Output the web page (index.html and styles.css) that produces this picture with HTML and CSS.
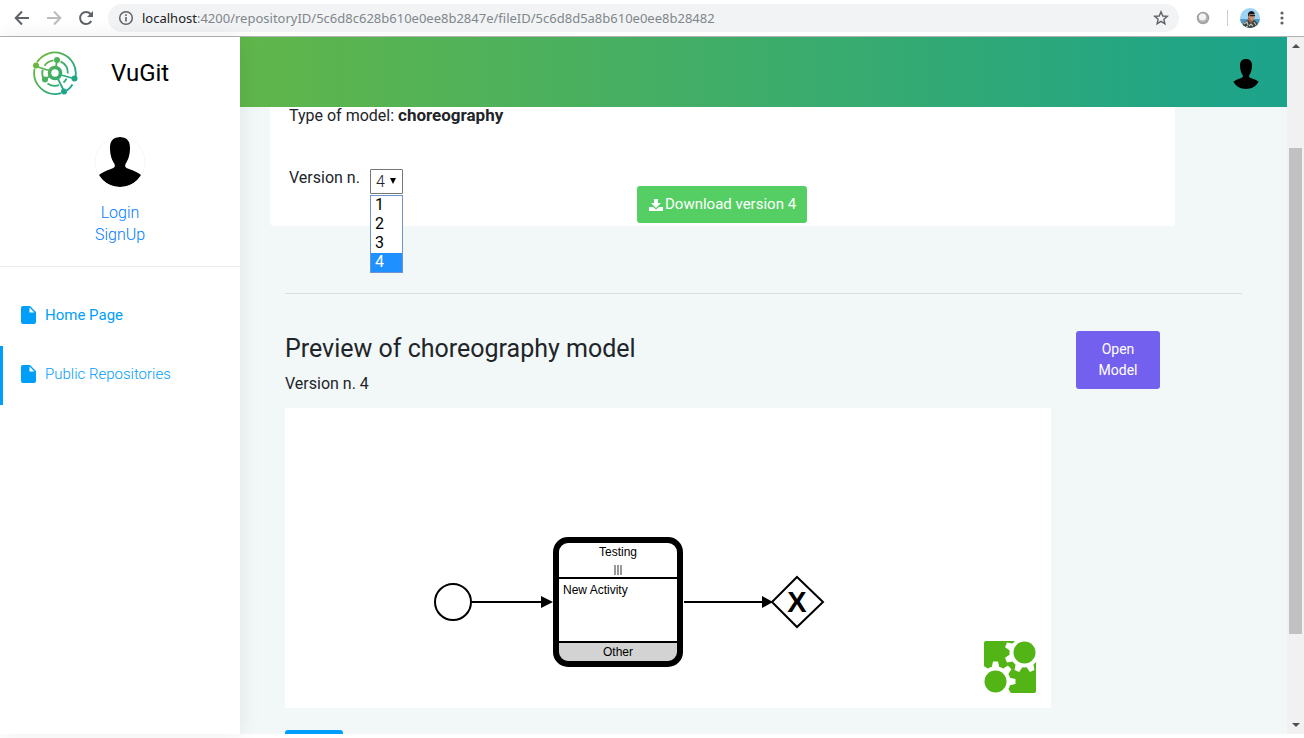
FILE: index.html
```html
<!DOCTYPE html>
<html lang="en">
<head>
<meta charset="utf-8">
<title>VuGit</title>
<link rel="stylesheet" href="styles.css">
</head>
<body>
<div class="browser">
  <button class="nav-btn" aria-label="Back"><svg width="16" height="16" viewBox="0 0 16 16" fill="none" stroke="#5f6368" stroke-width="2"><path d="M15 8H2M8 1.500L1.700 8L8 14.500"/></svg></button>
  <button class="nav-btn" aria-label="Forward"><svg width="16" height="16" viewBox="0 0 16 16" fill="none" stroke="#babcbe" stroke-width="2"><path d="M1 8H14M8 1.500L14.300 8L8 14.500"/></svg></button>
  <button class="nav-btn" aria-label="Reload"><svg width="16" height="16" viewBox="0 0 16 16"><path d="M13.300 11A6 6 0 1 1 12.600 4" fill="none" stroke="#5f6368" stroke-width="2"/><path d="M15 1V7H9Z" fill="#5f6368"/></svg></button>
  <div class="address">
    <svg width="16" height="16" viewBox="0 0 16 16"><circle cx="8" cy="8" r="6.300" fill="none" stroke="#5f6368" stroke-width="1.500"/><path d="M7.200 7h1.600v4.500H7.200zM7.200 4.300h1.600v1.600H7.200z" fill="#5f6368"/></svg>
    <span class="url"><span class="host">localhost</span>:4200/repositoryID/5c6d8c628b610e0ee8b2847e/fileID/5c6d8d5a8b610e0ee8b28482</span>
    <svg width="16" height="16" viewBox="0 0 16 16"><path d="M8 1.800L9.800 6L14.300 6.400L10.900 9.300L11.900 13.700L8 11.400L4.100 13.700L5.100 9.300L1.700 6.400L6.200 6Z" fill="none" stroke="#5f6368" stroke-width="1.400"/></svg>
  </div>
  <svg class="extension" width="14" height="14" viewBox="0 0 14 14"><circle cx="7" cy="7" r="5.500" fill="#b4b4b4" stroke="#a0a0a0" stroke-width="1.500"/><circle cx="6.500" cy="6" r="3.600" fill="#f4f4f4"/></svg>
  <span class="divider"></span>
  <svg class="profile" width="20" height="20" viewBox="0 0 20 20"><defs><clipPath id="face"><circle cx="10" cy="10" r="10"/></clipPath></defs><g clip-path="url(#face)"><path fill="#9dd3f5" d="M0 0h20v20H0z"/><path fill="#4d9ac8" d="M0 11h20v9H0z"/><path d="M8 9h5v6H8z" fill="#a3664c"/><path d="M8.500 5.500Q11.500 3 14.500 6V10Q13.500 13 11 12.500L8.500 9Z" fill="#c88e6e"/><path d="M8 7.500Q7.500 3.500 11.500 3Q15 3.500 14.500 6L9.500 6L9 9Z" fill="#18191d"/><path d="M10 6.800h5v1.500h-5z" fill="#222"/><path d="M2 20Q3 14 8 12L11 15L14 12Q18 14 19 20Z" fill="#3c4040"/><path d="M4 16l3-2 1 3M9 18l2-2 2 2M14 14l2 3M6 19l2-1" stroke="#c8c4b4" stroke-width="1.200" fill="none"/></g></svg>
  <button class="nav-btn" aria-label="Menu"><svg width="16" height="16" viewBox="0 0 16 16" fill="#5f6368"><circle cx="8" cy="3" r="1.600"/><circle cx="8" cy="8" r="1.600"/><circle cx="8" cy="13" r="1.600"/></svg></button>
</div>

<div class="app">
  <aside class="sidebar">
    <div class="brand">
      <svg width="46" height="46" viewBox="0 0 46 46"><defs><linearGradient id="lg" gradientUnits="userSpaceOnUse" x1="4" y1="8" x2="42" y2="38"><stop offset="0" stop-color="#72b836"/><stop offset="1" stop-color="#12a593"/></linearGradient></defs>
        <g fill="none" stroke="url(#lg)" stroke-width="1.800"><path d="M5 12.300A21 21 0 0 1 43.500 27M40.500 34.500A21 21 0 0 1 35 40.500M29 43.100A21 21 0 0 1 2.600 18.600"/><path d="M21.500 10.300A12.800 12.800 0 0 0 12.500 15.700M28.500 11.400A12.800 12.800 0 0 1 35.800 23.500M34.500 28.600A12.800 12.800 0 0 1 31.500 32.500M27 35.200A12.800 12.800 0 0 1 15.500 33.500M11.500 28.600A12.800 12.800 0 0 1 10.700 19.500"/><path d="M3 16L17 20.500M25 10L24 17M12 30L18 26M29 25L42 28.500M26 29L32 41"/><circle cx="23" cy="23" r="5.500" stroke-width="3.600"/></g>
        <g fill="url(#lg)"><circle cx="4" cy="15.500" r="3"/><circle cx="25" cy="10" r="3"/><circle cx="13" cy="29.500" r="3"/><circle cx="42.500" cy="28.500" r="3"/><circle cx="32" cy="41.500" r="3"/></g></svg>
      <span class="brand-name">VuGit</span>
    </div>
    <div class="account">
      <svg class="avatar" width="50" height="50" viewBox="0 0 50 50"><use href="#person"/></svg>
      <a href="#login">Login</a>
      <a href="#signup">SignUp</a>
    </div>
    <nav class="menu">
      <a class="menu-item strong" href="#home"><svg width="15" height="18" viewBox="0 0 15 18"><path fill="#009efb" fill-rule="evenodd" d="M2 0H9L15 6V16Q15 18 13 18H2Q0 18 0 16V2Q0 0 2 0ZM8.500 1.500V6.500H13.500Z"/></svg>Home Page</a>
      <a class="menu-item active" href="#public"><svg width="15" height="18" viewBox="0 0 15 18"><path fill="#009efb" fill-rule="evenodd" d="M2 0H9L15 6V16Q15 18 13 18H2Q0 18 0 16V2Q0 0 2 0ZM8.500 1.500V6.500H13.500Z"/></svg>Public Repositories</a>
    </nav>
  </aside>

  <div class="main">
    <header class="topbar">
      <button class="user-btn" aria-label="Account"><svg width="30" height="30" viewBox="0 0 50 50"><path id="person" d="M25 0C32 0 35 4 35 11C35 19 32.500 24 30.500 27C29.500 30 31 31 34 32C39 33.500 43 35.500 46 38C41 46 34 50 25 50S9 46 4 38C7 35.500 11 33.500 16 32C19 31 20.500 30 19.500 27C17.500 24 15 19 15 11C15 4 18 0 25 0Z"/></svg></button>
    </header>
    <main class="content">
      <section class="card">
        <p class="type">Type of model: <b>choreography</b></p>
        <div class="version-row">
          <label for="version">Version n.</label>
          <div class="picker">
            <select id="version"><option>1</option><option>2</option><option>3</option><option selected>4</option></select>
            <svg class="caret" width="6" height="6" viewBox="0 0 6 6"><path d="M0 0H6L3 6Z"/></svg>
            <ul class="options" role="listbox" aria-label="Version n.">
              <li role="option">1</li><li role="option">2</li><li role="option">3</li><li role="option" class="selected" aria-selected="true">4</li>
            </ul>
          </div>
          <button class="btn download"><svg width="14" height="12" viewBox="0 0 14 12" fill="#fff"><path d="M5 0H9V4H12L7 9L2 4H5Z"/><path d="M0 8H4L7 10.500L10 8H14V12H0Z"/></svg>Download version 4</button>
        </div>
      </section>
      <hr class="rule">
      <section class="preview">
        <div class="preview-body">
          <h1>Preview of choreography model</h1>
          <p class="subtitle">Version n. 4</p>
          <svg class="diagram" viewBox="0 0 766 300" role="img" aria-label="Choreography diagram">
            <g fill="#fff" stroke="#000" stroke-width="2">
              <circle cx="168" cy="194" r="18"/>
              <path d="M187 194H260M399 194H480"/>
              <path d="M512 169L538 194L512 219L487 194Z"/>
            </g>
            <path d="M256 188L268 194L256 200ZM477 188L488 194L477 200Z"/>
            <rect x="271" y="132" width="124" height="124" rx="12" fill="#fff"/>
            <path d="M271 234H395V244Q395 256 383 256H283Q271 256 271 244Z" fill="#d3d3d3"/>
            <path d="M271 170H395M271 234H395" stroke="#000" stroke-width="2"/>
            <rect x="271" y="132" width="124" height="124" rx="12" fill="none" stroke="#000" stroke-width="6"/>
            <path d="M330 157V167M333 157V167M336 157V167" stroke="#333"/>
            <g class="node-text">
              <text x="333" y="148" text-anchor="middle">Testing</text>
              <text x="278" y="186">New Activity</text>
              <text x="333" y="248" text-anchor="middle">Other</text>
            </g>
            <text class="gate" x="512" y="204" text-anchor="middle">X</text>
            <g transform="translate(699 233)">
              <rect width="52" height="52" rx="2" fill="#52b415"/>
              <path d="M40 0H53V14H40ZM-1 40H12V53H-1Z" fill="#fff"/>
              <g fill="#fff" transform="translate(40.500 11.500)"><circle r="15"/><g id="teeth" transform="rotate(22.500)"><path id="bar" d="M-20 -2.500L-13 -4V4L-20 2.500ZM20 -2.500L13 -4V4L20 2.500Z"/><use href="#bar" transform="rotate(45)"/><use href="#bar" transform="rotate(90)"/><use href="#bar" transform="rotate(135)"/></g></g>
              <g fill="#fff" transform="translate(11.500 40.500)"><circle r="15"/><use href="#teeth" transform="rotate(22.500)"/></g>
              <circle cx="40.500" cy="11.500" r="11" fill="#52b415"/><circle cx="11.500" cy="40.500" r="11" fill="#52b415"/>
            </g>
          </svg>
          <button class="btn back" aria-label="Back to repository"></button>
        </div>
        <button class="btn open">Open Model</button>
      </section>
    </main>
  </div>
  <div class="scrollbar" aria-hidden="true">
    <svg width="8" height="4" viewBox="0 0 8 4"><path d="M4 0L8 4H0Z" fill="#505050"/></svg>
    <div class="thumb"></div>
    <svg width="8" height="4" viewBox="0 0 8 4"><path d="M0 0H8L4 4Z" fill="#505050"/></svg>
  </div>
</div>
</body>
</html>
```
FILE: styles.css
```css
* { box-sizing: border-box; }
body {
  margin: 0;
  height: 100vh;
  padding-bottom: 4px;
  display: flex;
  flex-direction: column;
  overflow: hidden;
  background: #fff;
  color: #212529;
  font: 300 16px/24px Roboto, sans-serif;
}
button { border: 0; padding: 0; background: none; font: inherit; cursor: pointer; }
a { text-decoration: none; }
p, h1, ul { margin: 0; padding: 0; }
svg { flex: none; display: block; }

.browser {
  flex: none;
  display: flex;
  align-items: center;
  height: 37px;
  padding: 0 14px;
  border-bottom: 1px solid #b3b3b3;
}
.nav-btn { width: 16px; margin-right: 16px; }
.nav-btn:last-child { margin: 0 0 0 14px; }
.address {
  flex: 1;
  display: flex;
  align-items: center;
  gap: 8px;
  height: 28px;
  margin-left: -2px;
  padding: 0 10px;
  border-radius: 14px;
  background: #f1f3f4;
}
.url { flex: 1; font: 400 13px/20px "Noto Sans", sans-serif; color: #80868b; }
.host { color: #202124; }
.extension { margin-left: 17px; }
.divider { width: 1px; height: 16px; margin: 0 12px 0 17px; background: #ccc; }

.app { flex: 1; display: flex; min-height: 0; }
.sidebar {
  flex: none;
  position: relative;
  z-index: 1;
  width: 240px;
  background: #fff;
  box-shadow: 1px 0 20px rgba(0, 0, 0, .08);
}
.brand { display: flex; align-items: center; gap: 33px; height: 72px; padding-left: 32px; }
.brand-name { font-size: 24px; font-weight: 400; color: #000; }
.account {
  display: flex;
  flex-direction: column;
  align-items: center;
  padding: 28px 0 20px;
  border-bottom: 1px solid #e9ecef;
  font-size: 16px;
  line-height: 22px;
}
.account a { color: #007bff; }
.avatar { margin-bottom: 15px; border-radius: 50%; box-shadow: 0 0 1px #ddd; }
.menu { padding-top: 20px; }
.menu-item {
  display: flex;
  align-items: center;
  gap: 9px;
  height: 59px;
  padding: 0 0 3px 18px;
  border-left: 3px solid transparent;
  color: #009efb;
  font-size: 15px;
}
.strong { font-weight: 400; }
.active { border-color: #009efb; }

.main { flex: 1; min-width: 0; display: flex; flex-direction: column; background: #f2f7f8; }
.topbar {
  flex: none;
  display: flex;
  align-items: center;
  justify-content: flex-end;
  height: 70px;
  padding: 3px 26px 0 0;
  background: linear-gradient(to right, #60b64a, #1ba38b);
}
.content { flex: 1; min-height: 0; overflow: hidden; padding: 0 45px; font-weight: 400; }
.card {
  margin: 0 67px 0 -15px;
  padding: 0 19px 3px;
  border-radius: 0 0 4px 4px;
  background: #fff;
}
.type { height: 18px; line-height: 16px; }
.type b { font-size: 17px; font-weight: 700; }
.version-row { display: flex; align-items: flex-start; padding-top: 41px; }
.version-row label { width: 81px; }
.picker { position: relative; width: 33px; margin-top: 3px; }
#version {
  display: block;
  appearance: none;
  width: 100%;
  height: 25px;
  padding: 0 5px;
  border: 1px solid #767676;
  border-radius: 1px;
  background: #fff;
  color: #212529;
  font: inherit;
  font-weight: 300;
}
.caret { position: absolute; top: 9px; right: 7px; }
.options {
  position: absolute;
  top: 26px;
  left: 0;
  width: 100%;
  border: 1px solid #6f93cf;
  background: #fff;
  color: #000;
  font-weight: 400;
  line-height: 17px;
  list-style: none;
}
.options li { padding: 0 0 2px 4px; }
.options .selected { background: #1e90ff; color: #fff; }

.btn { border-radius: 3px; color: #fff; font-weight: 400; font-size: 15px; line-height: 21px; }
.download {
  display: flex;
  align-items: center;
  gap: 2px;
  margin: 20px 0 0 234px;
  padding: 8px 11px 8px 12px;
  background: #55ce63;
  white-space: nowrap;
}
.rule { margin: 67px 0 37px; border: 0; border-top: 1px solid #d9dedf; }
.preview { display: flex; align-items: flex-start; gap: 25px; padding-right: 82px; }
.preview-body { flex: 1; min-width: 0; }
h1 { padding-top: 3px; font-size: 25px; font-weight: 400; line-height: 30px; }
.subtitle { padding: 8px 0 12px; }
.diagram { width: 100%; height: auto; background: #fff; }
.node-text { font: 12px "Liberation Sans", sans-serif; }
.gate { font: bold 29px "Liberation Sans", sans-serif; }
.back { width: 58px; height: 37px; margin-top: 22px; background: #009efb; }
.open { flex: none; width: 84px; padding: 8px 20px; background: #7460ee; font-size: 14px; }

.scrollbar {
  flex: none;
  display: flex;
  flex-direction: column;
  align-items: center;
  width: 17px;
  padding: 7px 0;
  background: #f1f1f1;
}
.thumb { width: 13px; flex: 1; margin: 100px 0 89px; background: #c1c1c1; }
```
